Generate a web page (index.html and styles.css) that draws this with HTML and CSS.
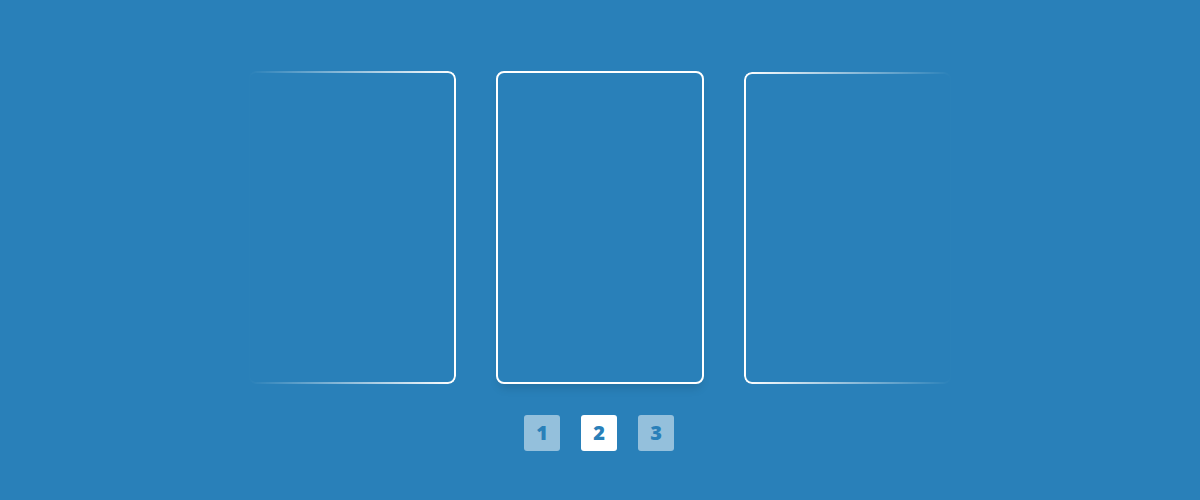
FILE: index.html
```html
<!DOCTYPE html>
<html lang="en">
<head>
<meta charset="utf-8">
<title>Carousel</title>
<link rel="stylesheet" href="styles.css">
</head>
<body>
<main class="carousel">
  <div class="track">
    <div class="card card-left"></div>
    <div class="card card-active"></div>
    <div class="card card-right"></div>
  </div>
  <nav class="pager">
    <button class="page">1</button>
    <button class="page page-active">2</button>
    <button class="page">3</button>
  </nav>
</main>
</body>
</html>
```

FILE: styles.css
```css
html, body {
  margin: 0;
  padding: 0;
  background: #2980b9;
  height: 100%;
}

.carousel {
  display: flex;
  flex-direction: column;
  align-items: center;
  padding-top: 71px;
}

.track {
  display: flex;
  gap: 40px;
}

.card {
  box-sizing: border-box;
  width: 208px;
  height: 313px;
  border: 2px solid #ffffff;
  border-radius: 8px;
}

.card-active {
  box-shadow: 0 7px 10px -3px rgba(0, 0, 0, 0.13);
}

.card-left {
  -webkit-mask-image: linear-gradient(to right, transparent 0%, #000 100%);
  mask-image: linear-gradient(to right, transparent 0%, #000 100%);
}

.card-right {
  -webkit-mask-image: linear-gradient(to left, transparent 0%, #000 100%);
  mask-image: linear-gradient(to left, transparent 0%, #000 100%);
  margin-top: 1px;
  height: 312px;
}

.pager {
  display: flex;
  gap: 21px;
  margin-top: 31px;
  padding-right: 2px;
}

.page {
  width: 36px;
  height: 36px;
  padding: 0;
  border: none;
  border-radius: 3px;
  background: rgba(255, 255, 255, 0.5);
  color: #2980b9;
  font-family: "Open Sans", "DejaVu Sans", sans-serif;
  font-weight: 800;
  font-size: 20px;
  line-height: 36px;
  text-align: center;
}

.page-active {
  background: #ffffff;
}
```
